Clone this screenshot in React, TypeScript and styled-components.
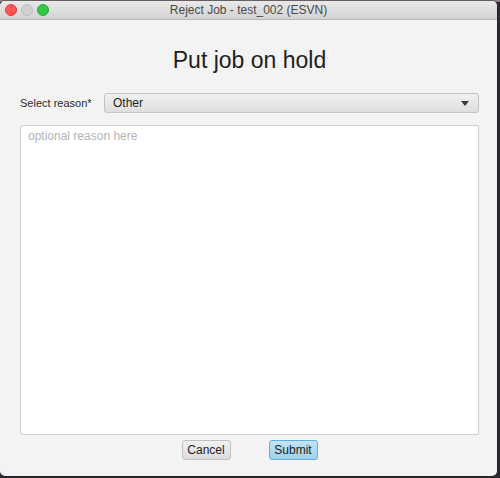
import React, { useState } from "react";
import styled, { createGlobalStyle } from "styled-components";

const GlobalStyle = createGlobalStyle`
  html, body {
    margin: 0;
    padding: 0;
    background: #3a3a40;
  }
  * {
    box-sizing: border-box;
  }
`;

const Desktop = styled.div`
  width: 500px;
  height: 478px;
  padding: 1px 3px 2px 0;
  background: linear-gradient(180deg, #8a7f86 0px, #8a7f86 2px, #2c2b30 2px);
  font-family: "Liberation Sans", Arial, sans-serif;
`;

const Window = styled.div`
  width: 497px;
  height: 475px;
  display: flex;
  flex-direction: column;
  background: #f3f3f3;
  border-radius: 5px;
  overflow: hidden;
  box-shadow: 0 0 0 1px rgba(0, 0, 0, 0.25);
`;

const TitleBar = styled.div`
  position: relative;
  height: 19px;
  flex: none;
  display: flex;
  align-items: center;
  justify-content: center;
  background: linear-gradient(180deg, #e9e9e9 0%, #d3d3d3 100%);
  border-bottom: 1px solid #b8b8b8;
  font-size: 12px;
  color: #4a4a4a;
`;

const Lights = styled.div`
  position: absolute;
  left: 5px;
  top: 3px;
  display: flex;
  gap: 4px;
`;

const Light = styled.span<{ $color: string; $border: string }>`
  width: 12px;
  height: 12px;
  border-radius: 50%;
  background: ${(p) => p.$color};
  border: 1px solid ${(p) => p.$border};
`;

const Body = styled.div`
  flex: 1;
  display: flex;
  flex-direction: column;
  padding: 0 18px 14px 20px;
`;

const Heading = styled.h1`
  margin: 24px 0 0;
  text-align: center;
  font-family: "Liberation Sans", Arial, sans-serif;
  font-weight: 400;
  font-size: 23px;
  line-height: 32px;
  color: #1e1e1e;
`;

const Row = styled.div`
  display: flex;
  align-items: center;
  margin-top: 17px;
  gap: 14px;
`;

const Label = styled.label`
  width: 70px;
  flex: none;
  font-size: 11px;
  color: #2a2a2a;
  white-space: nowrap;
`;

const SelectBox = styled.div`
  flex: 1;
  height: 20px;
  display: flex;
  align-items: center;
  justify-content: space-between;
  padding: 0 9px 0 8px;
  border: 1px solid #c4c4c4;
  border-radius: 3px;
  background: linear-gradient(180deg, #f1f1f1 0%, #dedede 100%);
  font-size: 12px;
  color: #1e1e1e;
`;

const Caret = styled.span`
  width: 0;
  height: 0;
  border-left: 4px solid transparent;
  border-right: 4px solid transparent;
  border-top: 5px solid #3c3c3c;
`;

const TextArea = styled.textarea`
  margin-top: 12px;
  height: 310px;
  width: 100%;
  resize: none;
  padding: 3px 7px;
  border: 1px solid #d0d0d0;
  border-radius: 2px;
  background: #ffffff;
  font-family: "Liberation Sans", Arial, sans-serif;
  font-size: 12px;
  color: #222;
  outline: none;

  &::placeholder {
    color: #b5b5b5;
  }
`;

const Buttons = styled.div`
  display: flex;
  justify-content: center;
  gap: 38px;
  margin-top: 5px;
`;

const Button = styled.button<{ $primary?: boolean }>`
  width: 49px;
  height: 20px;
  padding: 0;
  border-radius: 3px;
  font-family: "Liberation Sans", Arial, sans-serif;
  font-size: 12px;
  color: #222;
  border: 1px solid ${(p) => (p.$primary ? "#5fb0d8" : "#c2c2c2")};
  background: ${(p) =>
    p.$primary
      ? "linear-gradient(180deg, #c4e4f4 0%, #9fd1ec 100%)"
      : "linear-gradient(180deg, #f2f2f2 0%, #dcdcdc 100%)"};
`;

export default function App() {
  const [reason, setReason] = useState("");
  return (
    <>
      <GlobalStyle />
      <Desktop>
        <Window>
          <TitleBar>
            <Lights>
              <Light $color="#fc5753" $border="#df3d3a" />
              <Light $color="#d0d0d0" $border="#bdbdbd" />
              <Light $color="#33c748" $border="#27aa35" />
            </Lights>
            Reject Job - test_002 (ESVN)
          </TitleBar>
          <Body>
            <Heading>Put job on hold</Heading>
            <Row>
              <Label>Select reason*</Label>
              <SelectBox>
                <span>Other</span>
                <Caret />
              </SelectBox>
            </Row>
            <TextArea
              placeholder="optional reason here"
              value={reason}
              onChange={(e) => setReason(e.target.value)}
            />
            <Buttons>
              <Button>Cancel</Button>
              <Button $primary>Submit</Button>
            </Buttons>
          </Body>
        </Window>
      </Desktop>
    </>
  );
}
